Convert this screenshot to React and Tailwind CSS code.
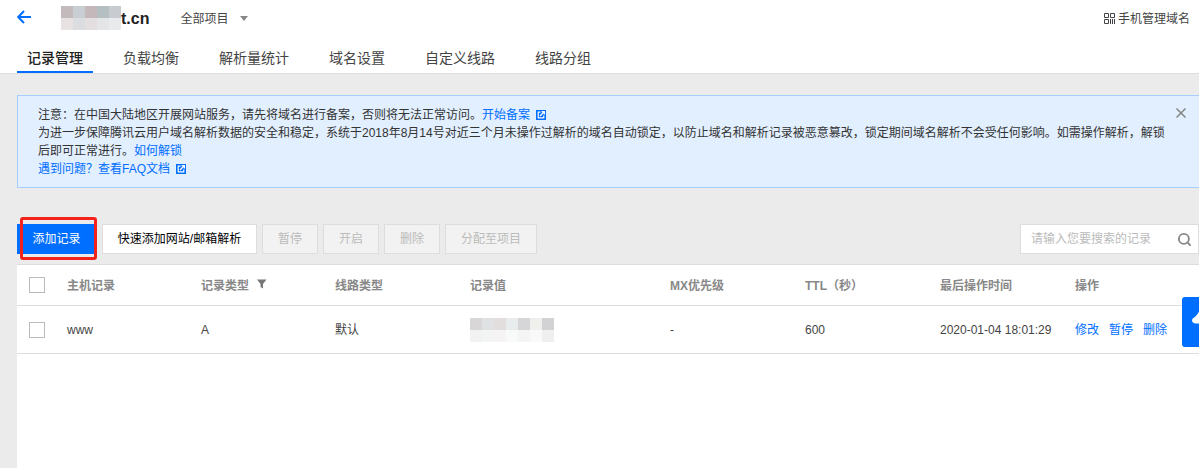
import { Search, X } from 'lucide-react'

const FONT = "font-['Liberation_Sans','Noto_Sans_CJK_SC',sans-serif]"

const TABS = ['记录管理', '负载均衡', '解析量统计', '域名设置', '自定义线路', '线路分组']
const ACTIONS = ['暂停', '开启', '删除', '分配至项目']
const COLS = 'grid grid-cols-[50px_134px_134px_135px_200px_135px_135px_135px_1fr] items-center'

const TITLE_BLUR = [
  ['#c3babc', '#c8ced2', '#c4b8ba', '#b5bfc1', '#c8ccd0'],
  ['#e8e2e2', '#dcdde1', '#e3dfe0', '#e4e5e6', '#e9eaeb'],
]
const VALUE_BLUR = [
  ['#d8d6d6', '#dfe1e3', '#e2dedd', '#e8eced', '#d6d6d8', '#efefee', '#d2d2d4'],
  ['#f3f2f2', '#f3f4f4', '#f5f3f3', '#f8f9f9', '#f4f4f4', '#f9f9f9', '#efefef'],
]

function Mosaic({ rows }) {
  return (
    <div className="flex flex-col">
      {rows.map((row, i) => (
        <div key={i} className="flex">
          {row.map((color, j) => (
            <span key={j} className="h-3 w-3" style={{ backgroundColor: color }} />
          ))}
        </div>
      ))}
    </div>
  )
}

function ExternalIcon() {
  return (
    <svg viewBox="0 0 10 10" className="ml-[6px] inline-block h-[10px] w-[10px] align-[-1px]">
      <rect width="10" height="10" fill="#006eff" />
      <path d="M4.5 2.2H2.2v5.6h5.6V5.5" fill="none" stroke="#fff" strokeWidth="1.2" />
      <path d="M4 6 8.2 1.8M5.6 1.6h2.8v2.8" fill="none" stroke="#fff" strokeWidth="1.3" />
    </svg>
  )
}

function Checkbox() {
  return <span className="ml-3 block h-4 w-4 border border-[#bbb] bg-white" />
}

function Link({ children }) {
  return <a className="text-[#006eff]">{children}</a>
}

export default function App() {
  return (
    <div className={`${FONT} relative h-[468px] w-[1199px] overflow-hidden bg-[#ebebeb] text-xs text-[#444]`}>
      {/* Top bar */}
      <header className="h-[74px] border-b border-[#dddddd] bg-white">
        <div className="flex h-[37px] items-center pl-[17px] pr-[9px]">
          <svg viewBox="0 0 14 14" className="mb-[3px] h-[14px] w-[14px]" fill="none" stroke="#006eff" strokeWidth="2">
            <path d="M14 7H1.5M7 1 1.2 7 7 13" />
          </svg>
          <div className="mb-[2px] ml-[30px]">
            <Mosaic rows={TITLE_BLUR} />
          </div>
          <span className="text-base font-bold leading-none text-[#222]">t.cn</span>
          <span className="ml-[31px]">全部项目</span>
          <span className="ml-3 h-0 w-0 border-x-4 border-t-[5px] border-x-transparent border-t-[#888]" />
          <div className="ml-auto flex items-center gap-[3px]">
            <svg viewBox="0 0 11 11" className="h-[11px] w-[11px]" fill="none" stroke="#444" strokeWidth="1">
              <path d="M.5.5h4v4h-4zM6.5.5h4v4h-4zM.5 6.5h4v4h-4zM6.5 6v5M8.5 6v5M10.5 6v5" />
            </svg>
            <span>手机管理域名</span>
          </div>
        </div>
        <nav className="flex gap-5 pl-[17px]">
          {TABS.map((tab, i) => (
            <a
              key={tab}
              className={`flex h-9 items-center border-b-2 px-[10px] pt-2 text-sm ${
                i === 0 ? 'border-[#006eff] font-medium text-[#222]' : 'border-transparent text-[#444]'
              }`}
            >
              {tab}
            </a>
          ))}
        </nav>
      </header>

      {/* Notice */}
      <section className="relative ml-[17px] mt-[21px] h-[93px] w-[1200px] border border-[#a6cdff] bg-[#e2efff] pb-2 pl-5 pr-[46px] pt-[10px] leading-[18px] text-[#333]">
        <p>
          注意：在中国大陆地区开展网站服务，请先将域名进行备案，否则将无法正常访问。<Link>开始备案</Link>
          <ExternalIcon />
        </p>
        <p>
          为进一步保障腾讯云用户域名解析数据的安全和稳定，系统于2018年8月14号对近三个月未操作过解析的域名自动锁定，以防止域名和解析记录被恶意篡改，锁定期间域名解析不会受任何影响。如需操作解析，解锁后即可正常进行。<Link>如何解锁</Link>
        </p>
        <p>
          <Link>遇到问题？查看FAQ文档</Link>
          <ExternalIcon />
        </p>
        <X className="absolute right-[27px] top-[9px] h-4 w-4 text-[#888]" strokeWidth={2.5} />
      </section>

      {/* Toolbar */}
      <div className="ml-[17px] mt-9 flex h-[30px] gap-[5px]">
        <button className="relative mr-[1px] w-[79px] bg-[#006eff] text-white">
          添加记录
          <span className="absolute -top-[7px] left-[3px] h-[43px] w-[77px] rounded-[3px] border-[3px] border-[#f5221b]" />
        </button>
        <button className="w-[155px] border border-[#dddddd] bg-white text-[#000]">快速添加网站/邮箱解析</button>
        {ACTIONS.map((label) => (
          <button
            key={label}
            className={`border border-[#dddddd] bg-[#f2f2f2] text-[#bbb] ${label === '分配至项目' ? 'w-[92px]' : 'w-[56px]'}`}
          >
            {label}
          </button>
        ))}
        <div className="ml-auto flex w-[179px] items-center justify-between border border-[#dddddd] bg-white pl-[10px] pr-[6px] text-[#bbb]">
          <span>请输入您要搜索的记录</span>
          <Search className="h-[15px] w-[15px] text-[#888]" strokeWidth={3} />
        </div>
      </div>

      {/* Records table */}
      <div className="ml-[17px] mt-[10px] h-[204px] border-t border-[#dddddd] bg-white">
        <div className={`${COLS} h-[41px] border-b border-[#dddddd] pt-[2px] font-bold text-[#888]`}>
          <span className="-mt-[2px]">
            <Checkbox />
          </span>
          <span>主机记录</span>
          <span className="flex items-center gap-2">
            记录类型
            <svg viewBox="0 0 10 10" className="mb-1 h-[10px] w-[10px]" fill="#777">
              <path d="M0 .5h9.5L6 5v4.5L3.5 8V5z" />
            </svg>
          </span>
          <span>线路类型</span>
          <span>记录值</span>
          <span>MX优先级</span>
          <span>TTL（秒）</span>
          <span>最后操作时间</span>
          <span>操作</span>
        </div>
        <div className={`${COLS} h-[48px] border-b border-[#dddddd]`}>
          <Checkbox />
          <span>www</span>
          <span>A</span>
          <span>默认</span>
          <Mosaic rows={VALUE_BLUR} />
          <span>-</span>
          <span>600</span>
          <span>2020-01-04 18:01:29</span>
          <span className="flex gap-[10px] text-[#006eff]">
            <a>修改</a>
            <a>暂停</a>
            <a>删除</a>
          </span>
        </div>
      </div>

      {/* Floating side button */}
      <div className="absolute left-[1182px] top-[297px] h-[50px] w-[30px] rounded-l-[3px] bg-[#006eff] pl-[10px] pt-[13px]">
        <svg viewBox="0 0 8 14" className="h-[14px] w-2" fill="#fff">
          <path d="M8 0C6.5 2.5 5 5 3 7 1 8 0 9 0 10.5 0 12.5 2 13.5 4 13.5H8z" />
        </svg>
      </div>
    </div>
  )
}
